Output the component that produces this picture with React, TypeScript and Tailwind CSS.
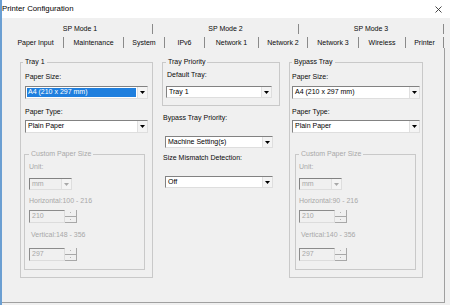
import React from "react";

type ComboProps = {
  value: string;
  className: string;
  selected?: boolean;
  disabled?: boolean;
};

function Arrow({ disabled = false }: { disabled?: boolean }) {
  return (
    <svg width="5" height="3" viewBox="0 0 5 3" aria-hidden="true">
      <path d="M0 0h5L2.5 3z" fill={disabled ? "#a8a8a8" : "#000000"} />
    </svg>
  );
}

function Combo({ value, className, selected = false, disabled = false }: ComboProps) {
  return (
    <div
      className={`flex border border-[#828282] border-r-[#dedede] border-b-[#dedede] ${
        disabled ? "bg-[#f0f0f0] text-[#a6a6a6]" : "bg-white text-black"
      } ${className}`}
    >
      <div className="flex min-w-0 flex-1 p-[1px]">
        <span
          className={`flex flex-1 items-center px-[1px] whitespace-nowrap ${
            selected ? "bg-[#1f7fde] text-white" : ""
          }`}
        >
          {value}
        </span>
      </div>
      <div className="flex w-[10px] items-center justify-center border-l border-[#e0e0e0] bg-[#f4f4f4]">
        <Arrow disabled={disabled} />
      </div>
    </div>
  );
}

function Spin({ value }: { value: string }) {
  return (
    <div className="flex h-[13px]">
      <div className="flex w-[36px] items-center border border-[#8c8c8c] border-r-[#dcdcdc] border-b-[#dcdcdc] bg-[#f0f0f0] px-[2px] text-[#a6a6a6]">
        {value}
      </div>
      <div className="flex w-[12px] flex-col border-r border-b border-[#a8a8a8]">
        <div className="flex flex-1 items-center justify-center border-b border-[#a8a8a8]">
          <span className="h-[1px] w-[1px] bg-[#b4b4b4]" />
        </div>
        <div className="flex flex-1 items-center justify-center">
          <span className="h-[1px] w-[1px] bg-[#b4b4b4]" />
        </div>
      </div>
    </div>
  );
}

function CustomSize({
  horizontal,
  vertical,
  className,
  legendClass,
  padClass,
}: {
  horizontal: string;
  vertical: string;
  className: string;
  legendClass: string;
  padClass: string;
}) {
  return (
    <fieldset className={`mt-[16px] w-[121px] border border-[#c9c9c9] pb-[8px] text-[#a8a8a8] ${className}`}>
      <legend className={`px-[2px] leading-[10px] ${legendClass}`}>Custom Paper Size</legend>
      <div className={`flex flex-col items-start ${padClass}`}>
        <div className="mt-[3px] leading-[10px]">Unit:</div>
        <Combo value="mm" disabled className="mt-[6px] h-[12px] w-[43px]" />
        <div className="mt-[6px] leading-[10px]">{horizontal}</div>
        <div className="mt-[4px]">
          <Spin value="210" />
        </div>
        <div className="mt-[7px] ml-[2px] leading-[10px]">{vertical}</div>
        <div className="mt-[8px]">
          <Spin value="297" />
        </div>
      </div>
    </fieldset>
  );
}

const backTabs = [
  { label: "SP Mode 1", w: "w-[145px]" },
  { label: "SP Mode 2", w: "w-[146px]" },
  { label: "SP Mode 3", w: "w-[145px]" },
];

const frontTabs = [
  { label: "Paper Input", w: "w-[56px]" },
  { label: "Maintenance", w: "w-[60px]" },
  { label: "System", w: "w-[41px]" },
  { label: "IPv6", w: "w-[40px]" },
  { label: "Network 1", w: "w-[54px]" },
  { label: "Network 2", w: "w-[49px]" },
  { label: "Network 3", w: "w-[51px]" },
  { label: "Wireless", w: "w-[47px]" },
  { label: "Printer", w: "w-[38px]" },
];

export default function App() {
  return (
    <div className="h-[305px] w-[450px] overflow-hidden border-l-2 border-[#6b9fd2] bg-[#f0f0f0] font-['Liberation_Sans',Arial,sans-serif] text-[7px] text-[#0a0a0a]">
      <header className="flex h-[18px] items-center justify-between bg-white">
        <span className="text-[7.8px] leading-[10px] text-black">Printer Configuration</span>
        <svg width="7" height="7" viewBox="0 0 7 7" className="mr-[8px]" aria-hidden="true">
          <path d="M0.5 0.5L6.5 6.5M6.5 0.5L0.5 6.5" stroke="#333" strokeWidth="0.9" />
        </svg>
      </header>

      <div className="mt-[6px] flex h-[10px] pl-[6px]">
        {backTabs.map((t) => (
          <div key={t.label} className={`flex items-center justify-center border-r border-[#8a8a8a] leading-[10px] ${t.w}`}>
            {t.label}
          </div>
        ))}
      </div>
      <div className="mt-[3px] flex h-[11px] pl-[6px]">
        {frontTabs.map((t) => (
          <div key={t.label} className={`flex items-center justify-center border-r border-[#8a8a8a] leading-[10px] ${t.w}`}>
            {t.label}
          </div>
        ))}
      </div>

      <section className="flex h-[255px] w-[443px] items-start gap-[9px] border-r border-b border-[#a0a0a0] pt-[9px] pl-[18px]">
        <fieldset className="w-[133px] border border-[#c9c9c9] pb-[7px]">
          <legend className="ml-[2px] px-[2px] leading-[10px]">Tray 1</legend>
          <div className="mt-[5px] pl-[4px] leading-[10px]">Paper Size:</div>
          <Combo value="A4 (210 x 297 mm)" selected className="mt-[4px] ml-[4px] h-[13px] w-[123px]" />
          <div className="mt-[8px] pl-[4px] leading-[10px]">Paper Type:</div>
          <Combo value="Plain Paper" className="mt-[3px] ml-[4px] h-[13px] w-[123px]" />
          <CustomSize
            horizontal="Horizontal:100 - 216"
            vertical="Vertical:148 - 356"
            className="ml-[3px]"
            legendClass="ml-[4px]"
            padClass="pl-[4px]"
          />
        </fieldset>

        <div className="flex w-[118px] flex-col">
          <fieldset className="w-[118px] border border-[#c9c9c9] pb-[7px]">
            <legend className="ml-[3px] px-[2px] leading-[10px]">Tray Priority</legend>
            <div className="mt-[3px] pl-[4px] leading-[10px]">Default Tray:</div>
            <Combo value="Tray 1" className="mt-[6px] ml-[3px] h-[12px] w-[106px]" />
          </fieldset>
          <div className="mt-[7px] pl-[1px] leading-[10px]">Bypass Tray Priority:</div>
          <Combo value="Machine Setting(s)" className="mt-[13px] ml-[3px] h-[12px] w-[108px]" />
          <div className="mt-[5px] pl-[1px] leading-[10px]">Size Mismatch Detection:</div>
          <Combo value="Off" className="mt-[13px] ml-[3px] h-[12px] w-[108px]" />
        </div>

        <fieldset className="w-[134px] border border-[#c9c9c9] pb-[7px]">
          <legend className="ml-[2px] px-[2px] leading-[10px]">Bypass Tray</legend>
          <div className="mt-[5px] pl-[2px] leading-[10px]">Paper Size:</div>
          <Combo value="A4 (210 x 297 mm)" className="mt-[4px] ml-[2px] h-[13px] w-[128px]" />
          <div className="mt-[8px] pl-[2px] leading-[10px]">Paper Type:</div>
          <Combo value="Plain Paper" className="mt-[3px] ml-[2px] h-[13px] w-[128px]" />
          <CustomSize
            horizontal="Horizontal:90 - 216"
            vertical="Vertical:140 - 356"
            className="ml-[5px]"
            legendClass="ml-[3px]"
            padClass="pl-[3px]"
          />
        </fieldset>
      </section>
    </div>
  );
}
